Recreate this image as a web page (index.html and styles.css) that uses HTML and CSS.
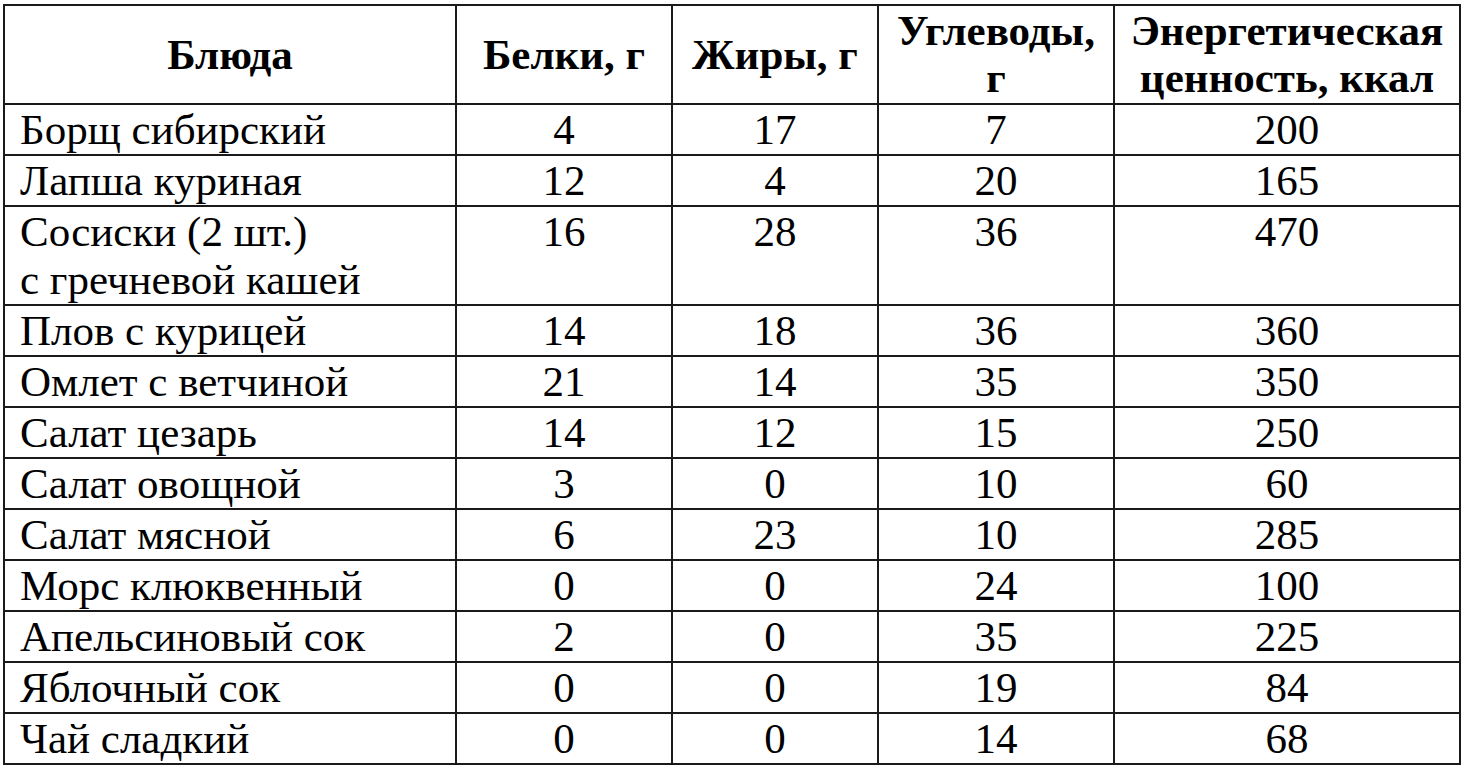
FILE: index.html
```html
<!DOCTYPE html>
<html lang="ru">
<head>
<meta charset="utf-8">
<title>Пищевая ценность блюд</title>
<link rel="stylesheet" href="styles.css">
</head>
<body>
<table class="nutrition">
  <colgroup>
    <col class="c-dish">
    <col class="c-prot">
    <col class="c-fat">
    <col class="c-carb">
    <col class="c-kcal">
  </colgroup>
  <thead>
    <tr>
      <th>Блюда</th>
      <th>Белки, г</th>
      <th>Жиры, г</th>
      <th class="top">Углеводы,<br>г</th>
      <th class="top">Энергетическая<br>ценность, ккал</th>
    </tr>
  </thead>
  <tbody>
    <tr><td class="name">Борщ сибирский</td><td>4</td><td>17</td><td>7</td><td>200</td></tr>
    <tr><td class="name">Лапша куриная</td><td>12</td><td>4</td><td>20</td><td>165</td></tr>
    <tr><td class="name">Сосиски (2 шт.)<br>с гречневой кашей</td><td>16</td><td>28</td><td>36</td><td>470</td></tr>
    <tr><td class="name">Плов с курицей</td><td>14</td><td>18</td><td>36</td><td>360</td></tr>
    <tr><td class="name">Омлет с ветчиной</td><td>21</td><td>14</td><td>35</td><td>350</td></tr>
    <tr><td class="name">Салат цезарь</td><td>14</td><td>12</td><td>15</td><td>250</td></tr>
    <tr><td class="name">Салат овощной</td><td>3</td><td>0</td><td>10</td><td>60</td></tr>
    <tr><td class="name">Салат мясной</td><td>6</td><td>23</td><td>10</td><td>285</td></tr>
    <tr><td class="name">Морс клюквенный</td><td>0</td><td>0</td><td>24</td><td>100</td></tr>
    <tr><td class="name">Апельсиновый сок</td><td>2</td><td>0</td><td>35</td><td>225</td></tr>
    <tr><td class="name">Яблочный сок</td><td>0</td><td>0</td><td>19</td><td>84</td></tr>
    <tr><td class="name">Чай сладкий</td><td>0</td><td>0</td><td>14</td><td>68</td></tr>
  </tbody>
</table>
</body>
</html>
```
FILE: styles.css
```css
html, body {
  margin: 0;
  background: #fff;
}
body {
  padding: 4px 0 0 3px;
  font-family: "Liberation Serif", "Times New Roman", serif;
  color: #000;
}
.nutrition {
  border-collapse: collapse;
  table-layout: fixed;
  width: 1456px;
}
.c-dish { width: 452px; }
.c-prot { width: 216px; }
.c-fat { width: 206px; }
.c-carb { width: 236px; }
.c-kcal { width: 346px; }

.nutrition th,
.nutrition td {
  border: 2px solid #1a1a1a;
  padding: 0;
  text-align: center;
}
.nutrition th {
  height: 96px;
  font-size: 43px;
  font-weight: bold;
  line-height: 47px;
  vertical-align: middle;
}
.nutrition th.top {
  vertical-align: top;
  padding-top: 1px;
}
.nutrition td {
  font-size: 43px;
  line-height: 48px;
  vertical-align: top;
  padding-top: 1px;
}
.nutrition td.name {
  text-align: left;
  padding-left: 15px;
}
```
